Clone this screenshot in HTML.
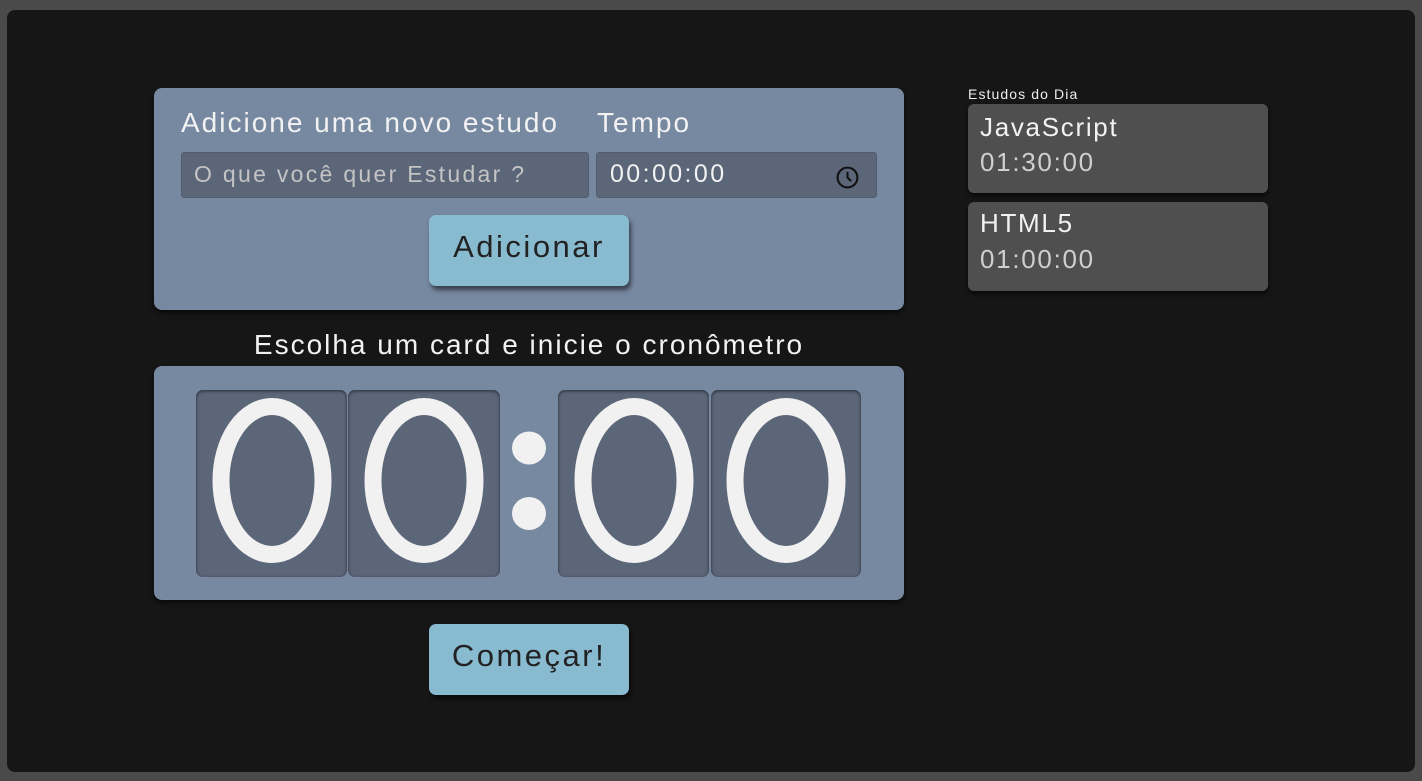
<!DOCTYPE html>
<html><head><style>
*{margin:0;padding:0;box-sizing:border-box}
body{width:1422px;height:781px;background:#4a4a4a;font-family:"Liberation Sans",sans-serif;position:relative;overflow:hidden}
.main{position:absolute;left:7px;top:10px;width:1408px;height:762px;background:#161616;border-radius:8px}
.a{position:absolute}
.panel{background:#7788a1;border-radius:8px;box-shadow:0 3px 5px rgba(0,0,0,.6)}
.inp{background:#5c6679;border-radius:3px;border:1px solid #525c6e}
.btn{background:#88bbd0;border-radius:7px;box-shadow:2px 4px 5px rgba(0,0,0,.55);color:#222;font-size:31px;text-align:center;line-height:64px;letter-spacing:2.5px}
.box{background:#5c6679;border-radius:7px;box-shadow:inset 0 1px 3px rgba(0,0,0,.6);top:390px;height:187px}
.card{background:#4f4f4f;border-radius:6px;left:968px;width:300px;height:89px;box-shadow:0 3px 5px rgba(0,0,0,.6)}
.card div{position:absolute;left:12px;font-size:26px;letter-spacing:1.7px}
</style></head><body>
<div class="main"></div>
<div class="a panel" style="left:154px;top:88px;width:750px;height:222px"></div>
<div class="a" style="left:181px;top:107px;font-size:28px;color:#f2f2f2;letter-spacing:2px">Adicione uma novo estudo</div>
<div class="a" style="left:597px;top:107px;font-size:28px;color:#f2f2f2;letter-spacing:2px">Tempo</div>
<div class="a inp" style="left:181px;top:152px;width:408px;height:46px"></div>
<div class="a" style="left:194px;top:161px;font-size:23px;color:#c4c4c4;letter-spacing:2.3px">O que você quer Estudar ?</div>
<div class="a inp" style="left:596px;top:152px;width:281px;height:46px"></div>
<div class="a" style="left:610px;top:160px;font-size:25px;color:#f2f2f2;letter-spacing:2.4px">00:00:00</div>
<svg class="a" style="left:835px;top:165px" width="25" height="25" viewBox="0 0 24 24"><circle cx="12" cy="12" r="9.5" fill="none" stroke="#111" stroke-width="2"/><path d="M12 6.5V12l3.5 3.5" fill="none" stroke="#111" stroke-width="2"/></svg>
<div class="a btn" style="left:429px;top:215px;width:200px;height:71px">Adicionar</div>
<div class="a" style="left:154px;top:329px;width:750px;text-align:center;font-size:28px;color:#f2f2f2;letter-spacing:2px">Escolha um card e inicie o cronômetro</div>
<div class="a panel" style="left:154px;top:366px;width:750px;height:234px"></div>
<div class="a box" style="left:196px;width:151px"></div>
<div class="a box" style="left:348px;width:152px"></div>
<div class="a box" style="left:558px;width:151px"></div>
<div class="a box" style="left:711px;width:150px"></div>
<svg class="a" style="left:0;top:0" width="1422" height="781">
<g fill="none" stroke="#f1f1f1" stroke-width="17">
<ellipse cx="272" cy="480.5" rx="51" ry="74"/>
<ellipse cx="424" cy="480.5" rx="51" ry="74"/>
<ellipse cx="634" cy="480.5" rx="51" ry="74"/>
<ellipse cx="786" cy="480.5" rx="51" ry="74"/>
</g>
<ellipse cx="529" cy="448" rx="17" ry="16.5" fill="#f1f1f1"/>
<ellipse cx="529" cy="513.5" rx="17" ry="16.5" fill="#f1f1f1"/>
</svg>
<div class="a btn" style="left:429px;top:624px;width:200px;height:71px">Começar!</div>
<div class="a" style="left:968px;top:86px;font-size:14px;color:#eee;letter-spacing:1.1px">Estudos do Dia</div>
<div class="a card" style="top:104px"><div style="top:8px;color:#f2f2f2">JavaScript</div><div style="top:43px;color:#cfcfcf">01:30:00</div></div>
<div class="a card" style="top:202px"><div style="top:6px;color:#f2f2f2">HTML5</div><div style="top:42px;color:#cfcfcf">01:00:00</div></div>
</body></html>
